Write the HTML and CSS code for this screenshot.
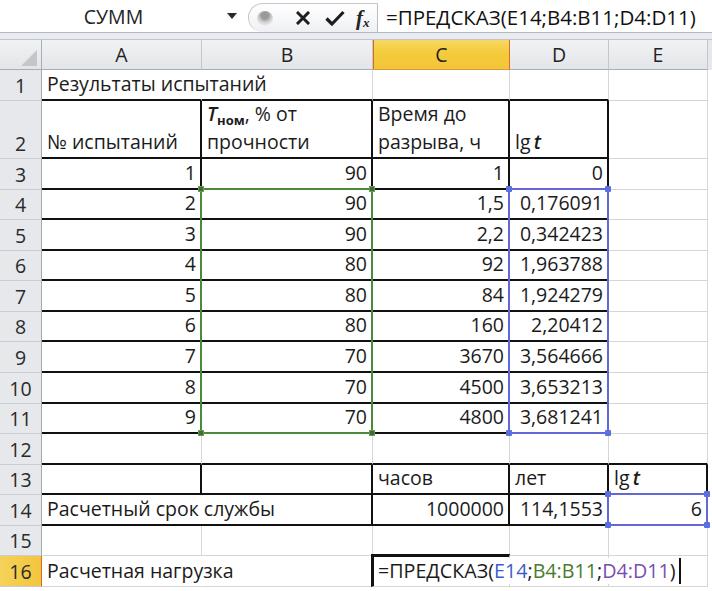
FILE: index.html
```html
<!DOCTYPE html>
<html lang="ru">
<head>
    <meta charset="UTF-8">
    <title>ПРЕДСКАЗ — расчетная нагрузка</title>
    <link rel="stylesheet" href="styles.css">
</head>
<body>
    <!-- name box, buttons and formula line -->
    <div class="formula-bar">
        <div class="name-box">
            <span class="name">СУММ</span>
            <span class="caret"></span>
        </div>
        <div class="fx-buttons">
            <span class="blob"></span>
            <svg class="btn-x" width="14" height="14" viewBox="0 0 14 14">
                <path d="M2 2 L12 12 M12 2 L2 12" stroke="#1e1e1e" stroke-width="3" stroke-linecap="square"/>
            </svg>
            <svg class="btn-ok" width="20" height="16" viewBox="0 0 20 16">
                <path d="M1.5 8.5 L7 14 L18.5 2" fill="none" stroke="#1e1e1e" stroke-width="3.2" stroke-linejoin="round"/>
            </svg>
            <span class="fx">f<sub>x</sub></span>
        </div>
        <div class="formula">=ПРЕДСКАЗ(E14;B4:B11;D4:D11)</div>
    </div>
    <div class="bar-gap"></div>

    <div class="sheet">
        <!-- column headers -->
        <div class="corner"><span class="tri"></span></div>
        <div class="hd">A</div>
        <div class="hd">B</div>
        <div class="hd sel">C</div>
        <div class="hd">D</div>
        <div class="hd">E</div>

        <div class="rh">1</div>
        <div class="c bb ov">Результаты испытаний</div>
        <div class="c bb"></div>
        <div class="c bb"></div>
        <div class="c bb"></div>
        <div class="c"></div>

        <div class="rh">2</div>
        <div class="c bb br">№ испытаний</div>
        <div class="c bb br"><span><i class="sym">T</i><sub class="sub">ном</sub>, % от<br>прочности</span></div>
        <div class="c bb br"><span>Время до<br>разрыва, ч</span></div>
        <div class="c bb br">lg&thinsp;<i class="sym">t</i></div>
        <div class="c"></div>

        <div class="rh">3</div>
        <div class="c bb br num">1</div>
        <div class="c bb br num">90</div>
        <div class="c bb br num">1</div>
        <div class="c bb br num">0</div>
        <div class="c"></div>

        <div class="rh">4</div>
        <div class="c bb br num">2</div>
        <div class="c bb br num">90</div>
        <div class="c bb br num">1,5</div>
        <div class="c bb br num">0,176091</div>
        <div class="c"></div>

        <div class="rh">5</div>
        <div class="c bb br num">3</div>
        <div class="c bb br num">90</div>
        <div class="c bb br num">2,2</div>
        <div class="c bb br num">0,342423</div>
        <div class="c"></div>

        <div class="rh">6</div>
        <div class="c bb br num">4</div>
        <div class="c bb br num">80</div>
        <div class="c bb br num">92</div>
        <div class="c bb br num">1,963788</div>
        <div class="c"></div>

        <div class="rh">7</div>
        <div class="c bb br num">5</div>
        <div class="c bb br num">80</div>
        <div class="c bb br num">84</div>
        <div class="c bb br num">1,924279</div>
        <div class="c"></div>

        <div class="rh">8</div>
        <div class="c bb br num">6</div>
        <div class="c bb br num">80</div>
        <div class="c bb br num">160</div>
        <div class="c bb br num">2,20412</div>
        <div class="c"></div>

        <div class="rh">9</div>
        <div class="c bb br num">7</div>
        <div class="c bb br num">70</div>
        <div class="c bb br num">3670</div>
        <div class="c bb br num">3,564666</div>
        <div class="c"></div>

        <div class="rh">10</div>
        <div class="c bb br num">8</div>
        <div class="c bb br num">70</div>
        <div class="c bb br num">4500</div>
        <div class="c bb br num">3,653213</div>
        <div class="c"></div>

        <div class="rh">11</div>
        <div class="c bb br num">9</div>
        <div class="c bb br num">70</div>
        <div class="c bb br num">4800</div>
        <div class="c bb br num">3,681241</div>
        <div class="c"></div>

        <div class="rh">12</div>
        <div class="c bb"></div>
        <div class="c bb"></div>
        <div class="c bb"></div>
        <div class="c bb"></div>
        <div class="c bb"></div>

        <div class="rh">13</div>
        <div class="c bb br"></div>
        <div class="c bb br"></div>
        <div class="c bb br">часов</div>
        <div class="c bb br">лет</div>
        <div class="c bb br">lg&thinsp;<i class="sym">t</i></div>

        <div class="rh">14</div>
        <div class="c bb br span2">Расчетный срок службы</div>
        <div class="c bb br num">1000000</div>
        <div class="c bb br num">114,1553</div>
        <div class="c bb br num">6</div>

        <div class="rh">15</div>
        <div class="c"></div>
        <div class="c"></div>
        <div class="c"></div>
        <div class="c"></div>
        <div class="c"></div>

        <div class="rh sel">16</div>
        <div class="c ov">Расчетная нагрузка</div>
        <div class="c"></div>
        <div class="c active">
            <span class="edit">=ПРЕДСКАЗ(<span class="ref-e">E14</span>;<span class="ref-b">B4:B11</span>;<span class="ref-d">D4:D11</span>)</span>
        </div>
        <div class="c"></div>
        <div class="c"></div>

        <!-- reference ranges of the formula being edited -->
        <div class="range green range-b"><i class="tl"></i><i class="tr"></i><i class="bl"></i><i class="br"></i></div>
        <div class="range blue range-d"><i class="tl"></i><i class="tr"></i><i class="bl"></i><i class="br"></i></div>
        <div class="range blue range-e"><i class="tl"></i><i class="tr"></i><i class="bl"></i><i class="br"></i></div>
    </div>
</body>
</html>
```

FILE: styles.css
```css
* {
    box-sizing: border-box;
}
body {
    margin: 0;
    width: 712px;
    height: 591px;
    overflow: hidden;
    background: #fff;
    font-family: 'Open Sans', 'Liberation Sans', sans-serif;
    font-size: 19.5px;
    color: #1b1b1b;
}

/* formula bar */
.formula-bar {
    display: flex;
    height: 33px;
    border-bottom: 1px solid #b3b8bf;
    background: #fff;
}
.name-box {
    width: 248px;
    display: flex;
    align-items: center;
}
.name-box .name {
    flex: 1;
    text-align: center;
    padding-left: 4px;
    padding-right: 4px;
    color: #222;
}
.name-box .caret {
    width: 0;
    height: 0;
    margin-right: 11px;
    border-left: 5px solid transparent;
    border-right: 5px solid transparent;
    border-top: 6px solid #2a2a2a;
}
.fx-buttons {
    width: 130px;
    margin-top: 3px;
    display: flex;
    align-items: center;
    border: 1px solid #c4c8ce;
    border-right-color: #b8bcc3;
    border-bottom: none;
    border-radius: 15px 0 0 15px;
    background: linear-gradient(#ffffff, #eef0f3);
}
.blob {
    width: 16px;
    height: 15px;
    margin-left: 8px;
    border-radius: 50%;
    background: radial-gradient(circle at 50% 30%, #9a9a9a 0 25%, #d6d6d6 55%, #eeeeee 80%);
}
.btn-x {
    margin-left: 23px;
}
.btn-ok {
    margin-left: 15px;
}
.fx {
    margin-left: 11px;
    font-family: 'Liberation Serif', serif;
    font-style: italic;
    font-weight: bold;
    font-size: 21px;
    color: #222;
}
.fx sub {
    font-size: 13px;
    vertical-align: -2px;
}
.formula {
    flex: 1;
    display: flex;
    align-items: center;
    padding-left: 8px;
    padding-top: 2px;
    font-size: 20.5px;
    color: #111;
}
.bar-gap {
    height: 7px;
    background: #e8ebef;
    border-bottom: 1px solid #c2c6cc;
}

/* grid of cells */
.sheet {
    display: grid;
    grid-template-columns: 42px 160px 171px 137px 99px 99px;
    grid-template-rows: 30px 31px 58px repeat(14, 30.57px);
    background: linear-gradient(#e6e8eb, #e6e8eb) top / 100% 30px no-repeat, #fff;
    position: relative;
}
.hd {
    display: flex;
    align-items: center;
    justify-content: center;
    background: linear-gradient(#f1f2f4, #e3e5e8);
    border-right: 1px solid #c3c7cc;
    border-bottom: 1px solid #a7adb5;
    color: #222;
}
.hd.sel {
    background: linear-gradient(#f7d862, #f4cb3b 45%, #f3c639);
    border-left: 1px solid #e0662a;
    border-right: 1px solid #e0662a;
    border-bottom-color: #d99a3a;
}
.corner {
    position: relative;
    background: linear-gradient(#f1f2f4, #e3e5e8);
    border-right: 1px solid #a7adb5;
    border-bottom: 1px solid #a7adb5;
}
.corner .tri {
    position: absolute;
    right: 4px;
    bottom: 3px;
    width: 16px;
    height: 16px;
    background: #c4c6c9;
    clip-path: polygon(100% 0, 100% 100%, 0 100%);
}
.rh {
    display: flex;
    align-items: flex-end;
    justify-content: center;
    padding-bottom: 1px;
    background: #e6e8eb;
    border-right: 1px solid #a3a9b1;
    border-bottom: 1px solid #c9cdd2;
    color: #2a2a2a;
}
.rh.sel {
    background: linear-gradient(90deg, #f5d25a, #f2c53f);
    border-right-color: #e0662a;
}
.c {
    display: flex;
    align-items: flex-end;
    padding: 0 4px 1px 5px;
    line-height: 28px;
    white-space: nowrap;
    border-right: 1px solid #d6d6d6;
    border-bottom: 1px solid #d6d6d6;
}
.c.num {
    justify-content: flex-end;
}
.c.bb {
    border-bottom: 2px solid #111;
}
.c.br {
    border-right: 2px solid #111;
}
.c.ov {
    border-right-color: transparent;
    overflow: visible;
    position: relative;
    z-index: 1;
}
.c.span2 {
    grid-column: span 2;
}
.sym {
    font-style: italic;
    font-weight: 600;
}
.sub {
    font-size: 13px;
    font-weight: bold;
    vertical-align: -4px;
    line-height: 0;
}

/* cell in edit mode */
.c.active {
    position: relative;
    z-index: 3;
    border-top: 3px solid #111;
    border-left: 3px solid #111;
    margin: -2px 0 0 -2px;
    padding-left: 4px;
}
.edit {
    position: relative;
    background: #fff;
    padding-right: 3px;
    border-right: 2px solid #111;
    line-height: 26px;
    margin-bottom: 1px;
    font-size: 19.7px;
}
.ref-e {
    color: #3e5ccc;
}
.ref-b {
    color: #4a7d2c;
}
.ref-d {
    color: #7a4cb4;
}

/* highlighted ranges, laid over their grid area */
.range {
    position: absolute;
    top: -2px;
    left: -2px;
    right: 0;
    bottom: 0;
    z-index: 2;
    border: 2px solid;
    pointer-events: none;
}
.range i {
    position: absolute;
    width: 6px;
    height: 6px;
}
.range .tl { left: -4px; top: -4px; }
.range .tr { right: -4px; top: -4px; }
.range .bl { left: -4px; bottom: -4px; }
.range .br { right: -4px; bottom: -4px; }
.range.green {
    border-color: #4c8a3a;
}
.range.green i {
    background: #3f6e34;
    border: 1px solid #6a9a5a;
}
.range.blue {
    border-color: #6468d6;
}
.range.blue i {
    background: #5a6fe0;
    border-radius: 1px;
}
.range-b {
    grid-column: 3 / 4;
    grid-row: 5 / 13;
}
.range-d {
    grid-column: 5 / 6;
    grid-row: 5 / 13;
}
.range-e {
    grid-column: 6 / 7;
    grid-row: 15 / 16;
}
```
